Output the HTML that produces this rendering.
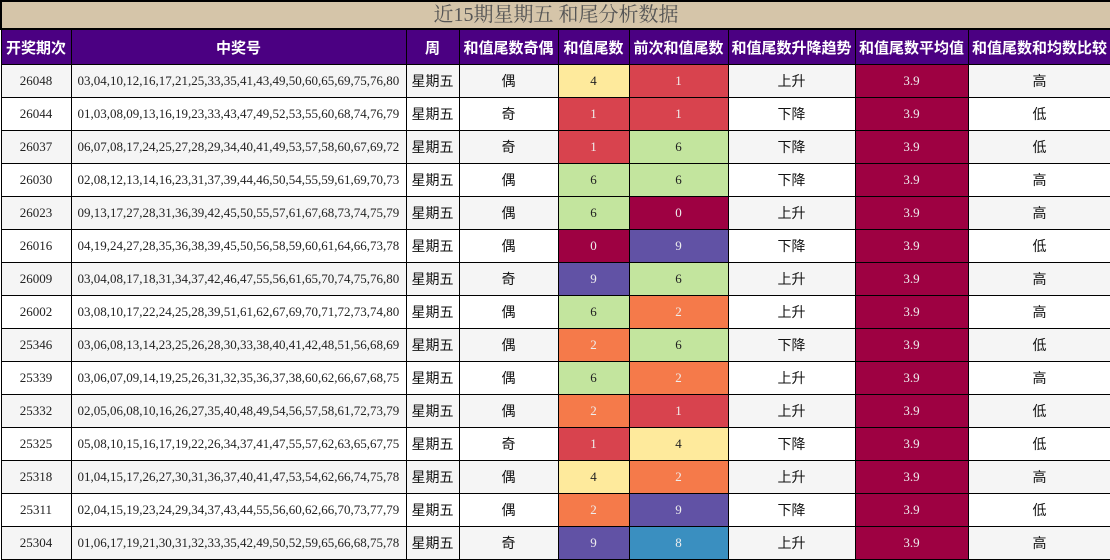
<!DOCTYPE html>
<html><head><meta charset="utf-8"><style>
body{margin:0;width:1110px;height:560px;overflow:hidden;background:#fff}
table{border-collapse:collapse;table-layout:fixed;width:1110px;position:absolute;left:0;top:0}
td,th{border:1px solid #000;text-align:center;padding:0;overflow:hidden;white-space:nowrap}
.t{height:26px;background:#d5c5a9;font:20px "Liberation Serif","Noto Serif CJK SC",serif;color:#555;border:2px solid #000;line-height:26px}
th{height:34px;background:#4b0082;color:#fff;font:bold 15px "Liberation Sans","Noto Sans CJK SC",sans-serif}
td{height:32px;font:13px "Liberation Serif","Noto Serif CJK SC",serif;color:#222}
td.c{font:14px "Liberation Sans","Noto Sans CJK SC",sans-serif;color:#111}
tr.o td{background:#f5f5f5}
tr td.n{text-align:left;padding-left:6px}
tr td.k0{background:#9e0142;color:#eee}
tr td.k1{background:#d8434e;color:#eee}
tr td.k2{background:#f57a4a;color:#eee}
tr td.k4{background:#feea9c;color:#222}
tr td.k6{background:#c3e59e;color:#222}
tr td.k8{background:#3a8fc0;color:#eee}
tr td.k9{background:#6152a5;color:#eee}
</style></head><body>
<table>
<colgroup><col style="width:70px"><col style="width:335px"><col style="width:53px"><col style="width:99px"><col style="width:71px"><col style="width:99px"><col style="width:127px"><col style="width:113px"><col style="width:143px"></colgroup>
<tr><td colspan="9" class="t">近15期星期五 和尾分析数据</td></tr>
<tr><th>开奖期次</th><th>中奖号</th><th>周</th><th>和值尾数奇偶</th><th>和值尾数</th><th>前次和值尾数</th><th>和值尾数升降趋势</th><th>和值尾数平均值</th><th>和值尾数和均数比较</th></tr>
<tr class="o"><td>26048</td><td class="n">03,04,10,12,16,17,21,25,33,35,41,43,49,50,60,65,69,75,76,80</td><td class="c">星期五</td><td class="c">偶</td><td class="k4">4</td><td class="k1">1</td><td class="c">上升</td><td class="k0">3.9</td><td class="c">高</td></tr>
<tr><td>26044</td><td class="n">01,03,08,09,13,16,19,23,33,43,47,49,52,53,55,60,68,74,76,79</td><td class="c">星期五</td><td class="c">奇</td><td class="k1">1</td><td class="k1">1</td><td class="c">下降</td><td class="k0">3.9</td><td class="c">低</td></tr>
<tr class="o"><td>26037</td><td class="n">06,07,08,17,24,25,27,28,29,34,40,41,49,53,57,58,60,67,69,72</td><td class="c">星期五</td><td class="c">奇</td><td class="k1">1</td><td class="k6">6</td><td class="c">下降</td><td class="k0">3.9</td><td class="c">低</td></tr>
<tr><td>26030</td><td class="n">02,08,12,13,14,16,23,31,37,39,44,46,50,54,55,59,61,69,70,73</td><td class="c">星期五</td><td class="c">偶</td><td class="k6">6</td><td class="k6">6</td><td class="c">下降</td><td class="k0">3.9</td><td class="c">高</td></tr>
<tr class="o"><td>26023</td><td class="n">09,13,17,27,28,31,36,39,42,45,50,55,57,61,67,68,73,74,75,79</td><td class="c">星期五</td><td class="c">偶</td><td class="k6">6</td><td class="k0">0</td><td class="c">上升</td><td class="k0">3.9</td><td class="c">高</td></tr>
<tr><td>26016</td><td class="n">04,19,24,27,28,35,36,38,39,45,50,56,58,59,60,61,64,66,73,78</td><td class="c">星期五</td><td class="c">偶</td><td class="k0">0</td><td class="k9">9</td><td class="c">下降</td><td class="k0">3.9</td><td class="c">低</td></tr>
<tr class="o"><td>26009</td><td class="n">03,04,08,17,18,31,34,37,42,46,47,55,56,61,65,70,74,75,76,80</td><td class="c">星期五</td><td class="c">奇</td><td class="k9">9</td><td class="k6">6</td><td class="c">上升</td><td class="k0">3.9</td><td class="c">高</td></tr>
<tr><td>26002</td><td class="n">03,08,10,17,22,24,25,28,39,51,61,62,67,69,70,71,72,73,74,80</td><td class="c">星期五</td><td class="c">偶</td><td class="k6">6</td><td class="k2">2</td><td class="c">上升</td><td class="k0">3.9</td><td class="c">高</td></tr>
<tr class="o"><td>25346</td><td class="n">03,06,08,13,14,23,25,26,28,30,33,38,40,41,42,48,51,56,68,69</td><td class="c">星期五</td><td class="c">偶</td><td class="k2">2</td><td class="k6">6</td><td class="c">下降</td><td class="k0">3.9</td><td class="c">低</td></tr>
<tr><td>25339</td><td class="n">03,06,07,09,14,19,25,26,31,32,35,36,37,38,60,62,66,67,68,75</td><td class="c">星期五</td><td class="c">偶</td><td class="k6">6</td><td class="k2">2</td><td class="c">上升</td><td class="k0">3.9</td><td class="c">高</td></tr>
<tr class="o"><td>25332</td><td class="n">02,05,06,08,10,16,26,27,35,40,48,49,54,56,57,58,61,72,73,79</td><td class="c">星期五</td><td class="c">偶</td><td class="k2">2</td><td class="k1">1</td><td class="c">上升</td><td class="k0">3.9</td><td class="c">低</td></tr>
<tr><td>25325</td><td class="n">05,08,10,15,16,17,19,22,26,34,37,41,47,55,57,62,63,65,67,75</td><td class="c">星期五</td><td class="c">奇</td><td class="k1">1</td><td class="k4">4</td><td class="c">下降</td><td class="k0">3.9</td><td class="c">低</td></tr>
<tr class="o"><td>25318</td><td class="n">01,04,15,17,26,27,30,31,36,37,40,41,47,53,54,62,66,74,75,78</td><td class="c">星期五</td><td class="c">偶</td><td class="k4">4</td><td class="k2">2</td><td class="c">上升</td><td class="k0">3.9</td><td class="c">高</td></tr>
<tr><td>25311</td><td class="n">02,04,15,19,23,24,29,34,37,43,44,55,56,60,62,66,70,73,77,79</td><td class="c">星期五</td><td class="c">偶</td><td class="k2">2</td><td class="k9">9</td><td class="c">下降</td><td class="k0">3.9</td><td class="c">低</td></tr>
<tr class="o"><td>25304</td><td class="n">01,06,17,19,21,30,31,32,33,35,42,49,50,52,59,65,66,68,75,78</td><td class="c">星期五</td><td class="c">奇</td><td class="k9">9</td><td class="k8">8</td><td class="c">上升</td><td class="k0">3.9</td><td class="c">高</td></tr>
</table>
</body></html>
